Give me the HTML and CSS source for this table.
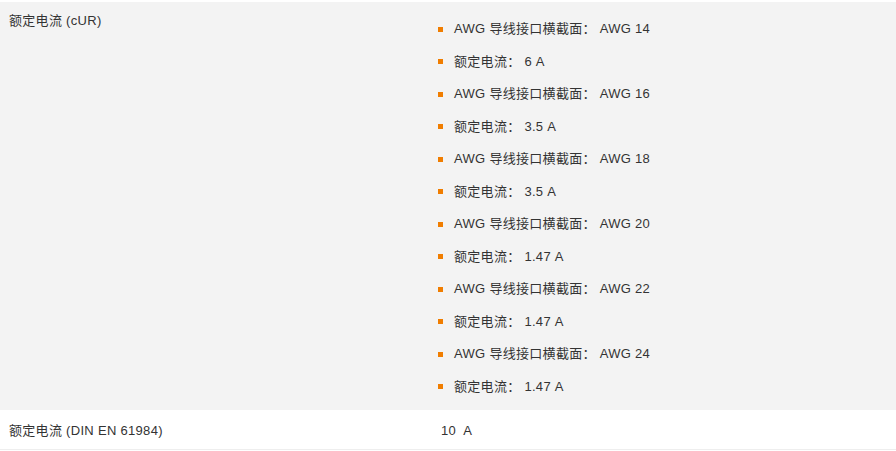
FILE: index.html
```html
<!DOCTYPE html>
<html lang="zh">
<head>
    <meta charset="UTF-8">
    <meta name="viewport" content="width=device-width, initial-scale=1.0">
    <title>技术数据</title>
    <link rel="stylesheet" href="styles.css">
</head>
<body>

    <div class="spec-table">
        <div class="spec-row grey">
            <div class="spec-label">额定电流 (cUR)</div>
            <div class="spec-value">
                <ul class="spec-list">
                    <li>AWG 导线接口横截面： AWG 14</li>
                    <li>额定电流： 6 A</li>
                    <li>AWG 导线接口横截面： AWG 16</li>
                    <li>额定电流： 3.5 A</li>
                    <li>AWG 导线接口横截面： AWG 18</li>
                    <li>额定电流： 3.5 A</li>
                    <li>AWG 导线接口横截面： AWG 20</li>
                    <li>额定电流： 1.47 A</li>
                    <li>AWG 导线接口横截面： AWG 22</li>
                    <li>额定电流： 1.47 A</li>
                    <li>AWG 导线接口横截面： AWG 24</li>
                    <li>额定电流： 1.47 A</li>
                </ul>
            </div>
        </div>
        <div class="spec-row">
            <div class="spec-label">额定电流 (DIN EN 61984)</div>
            <div class="spec-value single">10&nbsp; A</div>
        </div>
    </div>

</body>
</html>
```

FILE: styles.css
```css
body {
    margin: 0;
    font-family: "Liberation Sans", "Noto Sans CJK SC", sans-serif;
    font-size: 13px;
    letter-spacing: 0.3px;
    color: #333;
    background-color: #fff;
}
.spec-table {
    margin-top: 2px;
}
.spec-row {
    display: grid;
    grid-template-columns: 428px 1fr;
    border-bottom: 1px solid #eee;
}
.spec-row.grey {
    background-color: #f3f3f3;
    border-bottom: none;
}
.spec-label {
    padding: 10px 9px;
    line-height: 17px;
}
.spec-row:last-child .spec-label,
.spec-value.single {
    padding-top: 12px;
    padding-bottom: 9px;
    line-height: 18px;
}
.spec-value.single {
    padding-left: 13px;
}
.spec-list {
    list-style: none;
    margin: 0;
    padding: 11px 0 7px 10px;
}
.spec-list li {
    display: flex;
    align-items: center;
    line-height: 22.5px;
    padding: 5px 0;
}
.spec-list li::before {
    content: "";
    width: 5px;
    height: 5px;
    background-color: #f07d00;
    margin-right: 11px;
    flex-shrink: 0;
}
```
